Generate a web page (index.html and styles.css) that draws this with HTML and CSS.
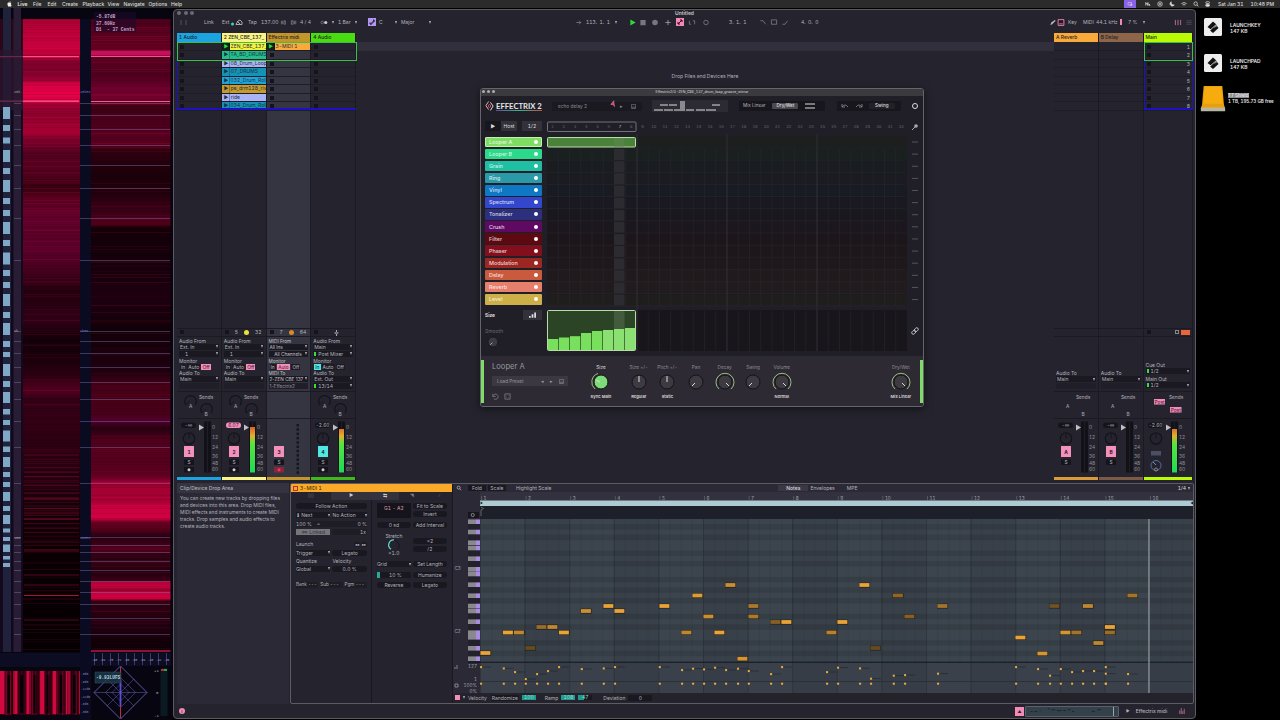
FILE: index.html
```html
<!DOCTYPE html>
<html lang="en">
<head>
<meta charset="UTF-8">
<meta name="viewport" content="width=device-width, initial-scale=1.0">
<title>Untitled</title>
<link rel="stylesheet" href="styles.css">
</head>
<body>

<header class="menubar">
    <svg class="apple" viewBox="0 0 10 12"><path d="M6.8 0C5.6.3 5 1.3 5 2.4 6.200 2.300 6.900 1.200 6.800 0ZM5 3.200C4 2.600 1 2.400.8 6.200c0 2.400 1.700 5.300 3 5.300.6 0 .8-.3 1.500-.3s.9.3 1.500.3c1.100 0 2-1.700 2.400-2.900C7.300 7.800 7.300 5 9 4.200 7.900 2.500 6.100 2.700 5 3.200Z"/></svg>
    <nav>
        <b>Live</b><span>File</span><span>Edit</span><span>Create</span><span>Playback</span><span>View</span><span>Navigate</span><span>Options</span><span>Help</span>
    </nav>
    <div class="status">
        <i class="share"><svg viewBox="0 0 12 8"><path d="M2 1h7v5H2zM7 4h3v3H7z"/></svg></i>
        <svg viewBox="0 0 8 8"><path d="M1 6V2l2 3 1-3v4l2-2v2h1"/></svg>
        <svg viewBox="0 0 8 8"><circle cx="4" cy="4" r="3"/><circle cx="4" cy="4" r="1"/></svg>
        <svg viewBox="0 0 8 8"><path class="solid" d="M3 1a3 3 0 1 0 4 4.200A3.200 3.200 0 0 1 3 1Z"/></svg>
        <svg viewBox="0 0 8 8"><path d="M.5 3.500q3.500-3 7 0M2 5q2-1.600 4 0M3.600 6.400h.8"/></svg>
        <svg viewBox="0 0 8 8"><circle cx="3.500" cy="3.500" r="2.300"/><path d="m5.200 5.200 2 2"/></svg>
        <svg viewBox="0 0 8 8"><rect x="1" y="1" width="5" height="2.300" rx="1"/><rect class="solid" x="1" y="4.500" width="5" height="2.500" rx="1"/></svg>
        <span>Sat Jan 31</span><span>10:48 PM</span>
    </div>
</header>

<main class="screen">
    <svg class="analyser" id="analyser" viewBox="0 8 173 712"></svg>

    <section class="live">
        <div class="titlebar"><div class="lights"><i></i><i></i><i></i></div>Untitled</div>

        <div class="transport">
            <div class="tl">
                <i class="ghost"></i><span>Link</span><span>Ext</span>
                <svg class="wide" viewBox="0 0 12 8"><circle cx="1.500" cy="6" r="1.500" fill="#3fd6c0"/><path d="M5 6.500h6V4L9 2 7 3zM6 3l3 3" stroke="#aaa" fill="none"/></svg>
                <span>Tap</span><span>137.00</span>
                <svg viewBox="0 0 6 8"><path d="M0 2v4M1.500 2v4M3 2v4h1.500V2z" class="dimline"/></svg>
                <svg viewBox="0 0 6 8"><path d="M0 2h2v4H0zM3.500 2v4M5 2v4" class="dimline"/></svg>
                <span>4 / 4</span>
                <svg viewBox="0 0 8 8"><circle cx="2" cy="4" r="1.500" class="dimline"/><circle cx="6" cy="4" r="1.800" fill="#ccc"/></svg>
                <em class="dd"></em><span>1 Bar</span><em class="dd"></em>
                <svg class="violet" viewBox="0 0 8 8"><path d="M2 6h2V4h2V2M2 4.500V6h1M5 2h1v1.500" fill="none" stroke="#222"/></svg>
                <span>C</span><em class="dd"></em><span>Major</span><em class="dd"></em>
            </div>
            <div class="tc">
                <svg viewBox="0 0 8 8"><path d="M1 4h5M4 2l2 2-2 2" class="dimline"/></svg>
                <span>113.&ensp;1.&ensp;1</span><em class="dd"></em>
                <svg viewBox="0 0 8 8"><path d="M1 .5 7 4 1 7.500z" fill="#2bdc3c"/></svg>
                <svg viewBox="0 0 8 8"><path d="M1 1h6v6H1z" fill="#777681"/></svg>
                <svg viewBox="0 0 8 8"><circle cx="4" cy="4" r="3.200" fill="#777681"/></svg>
                <svg viewBox="0 0 8 8"><path d="M4 1v6M1 4h6" stroke="#999" fill="none"/></svg>
                <svg class="pink" viewBox="0 0 8 8"><path d="m2 6 4-4M2 4v2h2M4 2h2v2" stroke="#402" fill="none"/></svg>
                <svg viewBox="0 0 8 8"><path d="M1 2v4h2M5 2h2v4" class="dimline"/></svg>
                <svg viewBox="0 0 8 8"><circle cx="4" cy="4" r="2.600" class="dimline"/></svg>
                <span>3.&ensp;1.&ensp;1</span>
                <svg viewBox="0 0 8 8"><path d="M1 2h3l3 4" class="dimline"/></svg>
                <svg viewBox="0 0 8 8"><path d="M1 1h6v5H1z" class="dimline"/></svg>
                <svg viewBox="0 0 8 8"><path d="M1 6h3l3-4" class="dimline"/></svg>
                <span>4.&ensp;0.&ensp;0</span>
            </div>
            <div class="tr">
                <svg viewBox="0 0 8 8"><path d="m1 7 1-3 4-3 1 1-4 4z" fill="#bbb"/></svg>
                <svg viewBox="0 0 8 8"><path d="M.7.7h6.600v6.600H.7z" fill="#241824" stroke="#f58cb8"/><path d="M2 5h4v1H2z" fill="#f58cb8"/></svg>
                <span>Key</span><span>MIDI</span><span>44.1 kHz</span><i class="bar"></i><span>7 %</span><em class="dd"></em>
                <svg viewBox="0 0 8 8"><path d="M1 1v6M4 1v6M7 1v6" stroke="#c87599" fill="none"/></svg>
                <svg viewBox="0 0 8 8"><path d="M1 2h6M1 4h6M1 6h6" stroke="#4a4954" fill="none"/></svg>
            </div>
        </div>

        <div class="session">
            <div class="tracks" id="tracks"></div>
            <div class="droparea">Drop Files and Devices Here</div>
            <div class="tracks" id="returns"></div>
        </div>

        <div class="detail">
            <aside class="help">
                <h2>Clip/Device Drop Area</h2>
                <p>You can create new tracks by dropping files<br>and devices into this area. Drop MIDI files,<br>MIDI effects and instruments to create MIDI<br>tracks. Drop samples and audio effects to<br>create audio tracks.</p>
            </aside>
            <div class="clipview">
                <div class="clippanel">
                    <div class="cliphead"><i></i>3-MIDI 1</div>
                    <div class="cliptabs"><i>▯▯</i><i class="on">▶</i><i class="on">⇆</i><i>◥</i><i>∕</i></div>
                    <div class="clipcols">
                        <div class="follow">
                            <div class="btn">Follow Action</div>
                            <div class="two act"><span class="sel">⬇ Next<em class="dd"></em></span><span class="sel">No Action<em class="dd"></em></span></div>
                            <div class="prob"><span>100 %</span><small>△</small><span>0 %</span></div>
                            <div class="two link"><span class="linked">⇔ Linked</span><span class="num">1x</span></div>
                            <div class="launch">Launch <span><b class="pill">◂◂</b> <b class="pill">▸▸</b></span></div>
                            <div class="two"><span class="sel">Trigger<em class="dd"></em></span><span class="btn">Legato</span></div>
                            <div class="two caps"><span>Quantize</span><span>Velocity</span></div>
                            <div class="two"><span class="sel">Global<em class="dd"></em></span><span class="btn">0.0 %</span></div>
                            <div class="three"><span>Bank ---</span><span>Sub ---</span><span>Pgm ---</span></div>
                        </div>
                        <div class="tools">
                            <div class="tcol">
                                <div class="range">G1 - A2</div>
                                <div class="btn sd">0 sd</div>
                                <div class="stretch">Stretch<svg viewBox="0 0 14 14"><path class="ktrack" d="M3 12A6 6 0 1 1 11 12"/><path d="M3.500 12A6 6 0 0 1 7 1" stroke="#5fd4cd" stroke-width="1.500" fill="none"/></svg>×1.0</div>
                                <div class="sel gridsel">Grid<em class="dd"></em></div>
                                <div class="btn amt">10 %</div>
                                <div class="btn">Reverse</div>
                            </div>
                            <div class="tcol right">
                                <div class="btn">Fit to Scale</div><div class="btn b2">Invert</div>
                                <div class="btn b3">Add Interval</div>
                                <div class="btn b4">×2</div><div class="btn b5">/2</div>
                                <div class="btn b6">Set Length</div><div class="btn b7">Humanize</div><div class="btn b8">Legato</div>
                            </div>
                        </div>
                    </div>
                </div>
                <div class="editor">
                    <div class="edhead">
                        <svg viewBox="0 0 8 8"><circle cx="3.500" cy="3.500" r="2"/><path d="m5 5 2 2"/></svg>
                        <span class="btn">Fold</span><span class="btn">Scale</span><i></i><span>Highlight Scale</span>
                        <div class="edtabs"><b>Notes</b><span>Envelopes</span><span>MPE</span></div>
                        <span class="quant">1/4<em class="dd"></em></span>
                    </div>
                    <svg id="roll" viewBox="453 492 740 201"></svg>
                    <div class="edfoot">
                        <i></i><em class="dd"></em><span>Velocity</span><span class="btn">Randomize</span><b>100</b><span class="rampt">Ramp</span><b>108</b><b class="part">47</b><span class="dev">Deviation</span><span class="zero">0</span>
                    </div>
                </div>
            </div>
        </div>

        <footer class="bottombar">
            <i class="info">i</i>
            <i class="warp">▲</i>
            <div class="mini"><svg viewBox="0 0 94 10"><path d="M4 5h2M8 5h3M14 4h1M23 2h2M27 3h4M33 4h5M40 4h3M45 3h3M50 5h2M72 5h3M78 3h4"/></svg></div>
            <em>▶</em><span>Effectrix midi</span>
            <svg class="bars" viewBox="0 0 8 8"><path d="M1 3v5M3 0v8M5 4v4M7 1v7"/></svg>
        </footer>

        <div class="plugin">
            <div class="ptitle"><div class="lights"><i></i><i></i><i></i></div>Effectrix2/3-ZEN_CBE_137_drum_loop_groove_mirror</div>
            <div class="phead">
                <svg class="logo" viewBox="0 0 10 12"><path d="M4 1 1 5.500 4 10" stroke="#f4b8c4"/><path d="M6 2 9 6 6 11" stroke="#eee"/><path d="m5 4 1.500 2L5 8 3.500 6z" stroke="#e34a61"/></svg>
                <strong>EFFECTRIX 2</strong>
                <div class="preset"><span>echo delay 2</span><em>▸</em><svg class="disk" viewBox="0 0 6 6"><path d="M.5.5h5v5h-5zM2 5.500V3.500h2v2"/></svg></div>
                <div class="scene"><svg viewBox="0 0 72 12"><path d="M0 10h9M10 10h9M20 10h10M32 10h8M42 10h9M52 10h10M6 5h8M15 5h8M58 5h8"/><path class="cur" d="M26 1h5v10h-5z"/></svg></div>
                <div class="mix"><span>Mix Linear</span><b>Dry/Wet</b><svg viewBox="0 0 10 6"><path d="M0 1h10M0 5h10"/></svg></div>
                <div class="undo"><svg viewBox="0 0 8 6"><path d="M1 1v3h3M1 4q3-4 6 0"/></svg><svg viewBox="0 0 8 6"><path d="M7 1v3H4M7 4Q4 0 1 4"/></svg><b>Swing</b></div>
                <svg class="gear" viewBox="0 0 8 8"><circle cx="4" cy="4" r="2.500"/></svg>
            </div>
            <div class="pbody">
                <div class="pleft">
                    <div class="host"><b>▶</b><span>Host</span><span class="rate">1/2</span></div>
                    <div id="effects"></div>
                    <div class="sizehead"><b>Size</b><i><svg viewBox="0 0 8 6"><path d="M0 4h2v2H0zM3 2h2v4H3zM6 0h2v6H6z"/></svg></i></div>
                    <div class="smooth">Smooth<svg class="knob" viewBox="0 0 20 20"><circle class="kface" cx="10" cy="10" r="7"/><path d="m9 11-3 3"/></svg></div>
                </div>
                <svg id="steps" viewBox="545 116 376 240"></svg>
            </div>
            <div class="pfoot">
                <div class="fxname"><h3>Looper A</h3><div class="load"><span>Load Preset</span><em>◂</em><em>▸</em><svg class="disk" viewBox="0 0 6 6"><path d="M.5.5h5v5h-5zM2 5.500V3.500h2v2"/></svg></div><div class="rst"><svg viewBox="0 0 8 8"><path d="M1 1v3h3M1 4a3 3 0 1 1 1 2.500"/></svg><svg viewBox="0 0 8 8"><path d="M1 1h6v6H1zM3 3h.5M5 5h.5M3 5h.5M5 3h.5"/></svg></div></div>
                <div class="knobs" id="knobs"></div>
            </div>
        </div>
        <svg class="cursor" viewBox="0 0 8 9"><path d="M5 0 6 8 4.300 5.500 1 5z"/></svg>
    </section>

    <aside class="desktop">
        <div class="file"><svg viewBox="0 0 18 18"><rect width="18" height="18" rx="1.500" fill="#eee"/><path d="M3.500 9 9 3.500 13 7 7.500 12zM6 12.500l7-4.500 1.500 2L9 15z" fill="#111"/><path d="m5 13 9-8" stroke="#eee" stroke-width=".8"/></svg><p>LAUNCHKEY<br>147 KB</p></div>
        <div class="file"><svg viewBox="0 0 18 18"><rect width="18" height="18" rx="1.500" fill="#eee"/><path d="M3.500 9 9 3.500 13 7 7.500 12zM6 12.500l7-4.500 1.500 2L9 15z" fill="#111"/><path d="m5 13 9-8" stroke="#eee" stroke-width=".8"/></svg><p>LAUNCHPAD<br>147 KB</p></div>
        <div class="file drive"><svg viewBox="0 0 30 30"><path d="m2 25 1.500-4h23L28 25v3H2z" fill="#b8b5a0"/><path d="M5 1h20l2 23H3z" fill="#e99f0b"/><path d="M6 2h18l1.500 18h-21z" fill="#f6ab0e"/></svg><p><mark>T7 Shield</mark><br>1 TB, 195.73 GB free</p></div>
    </aside>
</main>

<script src="script.js"></script>
</body>
</html>
```

FILE: styles.css
```css
* {
    box-sizing: border-box;
}
body {
    margin: 0;
    width: 1280px;
    height: 720px;
    overflow: hidden;
    background: #000;
    color: #b4b3ba;
    font-family: Inter, "Liberation Sans", sans-serif;
    font-size: 5px;
    font-variant-numeric: tabular-nums;
    line-height: 6px;
    white-space: nowrap;
}
i, em {
    font-style: normal;
}
svg {
    display: block;
    flex: none;
}
.menubar {
    display: flex;
    align-items: center;
    height: 8px;
    background: #2b2b2b;
    color: #ddd;
    padding: 0 6px 0 7px;
}
.menubar nav {
    display: grid;
    grid-template-columns: 15.5px 14.5px 14.5px 20.500px 25px 16px 25px 22.500px 12px;
    margin-left: 5.500px;
    font-weight: 500;
}
.apple {
    width: 5px;
    height: 6px;
    fill: #eee;
}
.status {
    display: flex;
    align-items: center;
    margin-left: auto;
    gap: 6px;
    font-weight: 500;
}
.status svg {
    width: 6px;
    height: 6px;
    fill: none;
    stroke: #ddd;
}
.status .solid {
    fill: #ddd;
}
.status .share {
    background: #8a62e8;
    width: 12px;
    height: 8px;
    margin-right: 3px;
    padding: 1px 3px;
}
.status span {
    margin-left: 1px;
}
.screen {
    display: flex;
    height: 712px;
}
.analyser {
    width: 173px;
    height: 712px;
}
.analyser text {
    font-family: "Liberation Mono", monospace;
}

/* Live window */
.live {
    position: relative;
    display: flex;
    flex-direction: column;
    width: 1023px;
    height: 710px;
    margin-top: 1px;
    background: #25242e;
    border: 1px solid #5b5a62;
    border-radius: 4px;
    overflow: hidden;
}
.live > div {
    flex: none;
}
.titlebar {
    height: 7px;
    text-align: center;
    color: #c8c8cc;
    font-weight: 600;
    line-height: 7px;
}
.lights {
    float: left;
    display: flex;
    gap: 2.500px;
    padding: 1px 0 0 3px;
    margin-right: -20px;
}
.lights i {
    width: 4px;
    height: 4px;
    border-radius: 50%;
    background: #6b6a72;
}
.dd {
    display: inline-block;
    justify-self: start;
    width: 0;
    border: 1.500px solid transparent;
    border-top: 3px solid #b4b3ba;
    border-bottom: 0;
}
.dimline {
    fill: none;
    stroke: #8b8a94;
    stroke-width: .8;
}
.transport {
    display: grid;
    grid-template-columns: 406px 472px 1fr;
    height: 16px;
    padding-top: 1px;
}
.transport > div {
    display: grid;
    align-items: center;
    height: 8px;
}
.transport svg {
    width: 8px;
    height: 7px;
}
.transport .wide {
    width: 12px;
    height: 8px;
}
.tl {
    grid-template-columns: 24px 18px 9px 17px 13px 19px 10px 10px 20px 12px 6px 17px 13px 11px 16px 6px 28px 8px;
    padding-left: 6px;
}
.ghost {
    width: 7px;
    height: 5px;
    border: 1px solid #3b3a45;
    border-width: 0 2px;
}
.transport .violet {
    height: 8px;
    background: #b396f3;
}
.tc {
    grid-template-columns: 11px 29px 14px 10px 12px 13px 12px 12px 14px 27px 30px 11px 11px 20px 30px;
    margin-left: -5px;
}
.transport .pink {
    height: 8px;
    background: #f08ab8;
}
.tr {
    grid-template-columns: 8px 11px 15px 13px 24px 8px 15px 31px 11px 8px;
    margin-left: -3px;
}
.bar {
    width: 1.500px;
    height: 6px;
    background: #f08ab8;
}

/* session */
.session {
    display: flex;
    height: 447px;
    padding: 0 2px 0 3px;
}
.tracks {
    display: flex;
    position: relative;
}
.droparea {
    flex: 1;
    text-align: center;
    padding-top: 40px;
    background: linear-gradient(#25242e 9px, #302f3b 9px, #302f3b 18px, #25242e 18px);
}
.track {
    display: flex;
    flex-direction: column;
    width: 44.750px;
    border-right: 1px solid #1b1a23;
}
.track.main {
    width: 49.500px;
}
.track.lit {
    background: #343540;
}
.track h4 {
    margin: 0 0 1px;
    height: 8.500px;
    padding-left: 2px;
    font-size: 4.900px;
    font-weight: 500;
    line-height: 9px;
    color: #222;
    overflow: hidden;
}
.slot {
    display: flex;
    height: 8.550px;
    border-bottom: 1px solid #1e1d27;
    padding: 1px 0 0 3px;
    line-height: 7px;
}
.slot i {
    width: 4px;
    height: 4px;
    margin-top: 1px;
    background: #15141c;
}
.slot.clip {
    padding: 0;
    color: #1d3040;
}
.slot.clip i {
    width: 8px;
    height: 7.500px;
    margin: 0;
    padding-left: 2px;
    background: none;
    border-right: 1px solid #0004;
    font-size: 5px;
}
.slot.playing i {
    background: #10211a;
    color: #2bdc3c;
}
.slot span {
    padding-left: 1px;
    overflow: hidden;
}
.main .slot {
    justify-content: space-between;
    padding-right: 2px;
}
.scenes {
    position: absolute;
    left: 0;
    right: 0;
    top: 9px;
    height: 68px;
    border: solid #1c12c4;
    border-width: 1px 1px 2px;
}
#tracks .scenes {
    border-right: 0;
}
#returns .scenes {
    left: 89.500px;
}
.scenes:before {
    content: "";
    display: block;
    height: 17px;
    margin: -1px -1px 0;
    border: 1px solid #3bc14a;
}
.space {
    flex: 1;
}
.stat {
    display: flex;
    align-items: center;
    height: 9.500px;
    padding: 0 4px 0 3px;
    border: solid #1b1a23;
    border-width: 1px 0;
    justify-content: space-between;
}
.stat i {
    width: 4px;
    height: 4px;
    background: #15141c;
}
.stat .dot {
    width: 5px;
    height: 5px;
    border-radius: 50%;
}
.stat .mic {
    width: 5px;
    height: 7px;
    margin-right: 12px;
    fill: none;
    stroke: #aaa;
}
.stat .stop {
    background: none;
    border: 1px solid #888;
    margin-left: 23px;
}
.stat .back {
    width: 9px;
    height: 5px;
    margin-right: -2px;
    background: #e8663a;
}
.io {
    display: flex;
    flex-direction: column;
    height: 55px;
    padding: .5px 2px 2px;
    border-bottom: 1px solid #1b1a23;
    font-size: 5px;
}
.lit .io {
    font-size: 4.700px;
    font-variant-numeric: normal;
    color: #c4c3ca;
}
.io.end {
    justify-content: flex-end;
}
.io label {
    height: 6px;
    line-height: 7px;
}
.sel {
    display: flex;
    justify-content: space-between;
    align-items: center;
    background: #1a1922;
}
.io .sel {
    height: 6px;
    margin-bottom: 1px;
    padding: 0 1px;
}
.io .sel.flat {
    height: 6px;
    margin-bottom: 0;
    background: #201f29;
    color: #99989f;
}
.io .sel u {
    width: 2px;
    height: 4px;
    background: #3ddc3a;
    margin-right: 2px;
}
.io .sel span {
    flex: 1;
}
.mon {
    display: flex;
    justify-content: space-between;
    height: 6px;
    padding: 0 8px 0 1px;
}
.mon span {
    background: #1c1b24;
    padding: 0 1px;
}
.mon .hot {
    background: #f590bd;
    color: #401428;
}
.mon .cyan {
    background: #4fe8e4;
    color: #123;
}
.sends {
    height: 27px;
    border-bottom: 1px solid #1b1a23;
}
.sends svg {
    width: 44px;
    height: 26px;
}
.sends text, .mixer text {
    fill: #b4b3ba;
    font-size: 4.800px;
}
.ring {
    fill: none;
    stroke: #14131a;
    stroke-width: 1.200;
}
.mixer {
    height: 57.500px;
}
.mixer svg {
    width: 44px;
    height: 57px;
}
.strip {
    height: 3.500px;
}

/* detail view */
.detail {
    display: flex;
    height: 221px;
    margin-top: 3px;
    padding: 0 1px 0 3px;
}
.help {
    width: 112px;
    background: #2a2935;
    line-height: 7.100px;
}
.help h2 {
    margin: 0;
    height: 10px;
    padding: 2px 3px;
    font-size: 5px;
    font-weight: 500;
    background: #34333f;
}
.help p {
    margin: 1.500px 3px;
    font-size: 4.850px;
}
.clipview {
    display: flex;
    width: 905px;
    margin-left: 1px;
    border: 1px solid #5d5c64;
    border-radius: 2px;
    overflow: hidden;
}
.clippanel {
    width: 162px;
    border-right: 1px solid #191820;
}
.cliphead {
    display: flex;
    align-items: center;
    gap: 2px;
    height: 8px;
    padding-left: 2px;
    background: #f9aa28;
    color: #33220a;
}
.cliphead i {
    width: 5px;
    height: 5px;
    border: 1px solid #c42b35;
}
.cliptabs {
    display: grid;
    grid-template-columns: 40px 41px 27px 27px 27px;
    height: 8px;
    line-height: 8px;
    text-align: center;
    font-size: 4.500px;
}
.cliptabs i {
    color: #777681;
}
.cliptabs .on {
    background: #33323d;
    color: #ccc;
}
.clipcols {
    display: flex;
    height: 203px;
}
.btn {
    display: block;
    height: 6px;
    border-radius: 3px;
    background: #191820;
    text-align: center;
}
.follow {
    width: 81px;
    padding: 3px 4px 0 5px;
    border-right: 1px solid #191820;
}
.two {
    display: grid;
    grid-template-columns: 1fr 1fr;
    gap: 2px;
    height: 6px;
}
.act {
    margin: 3px 0;
}
.prob {
    display: flex;
    justify-content: space-between;
    background: #1e1d26;
    height: 6px;
}
.prob small {
    margin-right: 32px;
    font-size: 3px;
}
.link {
    margin-top: 2px;
}
.linked {
    background: #76757c;
    color: #37363d;
    text-align: center;
}
.num {
    background: #1e1d26;
    text-align: right;
    padding-right: 1px;
}
.launch {
    display: flex;
    justify-content: space-between;
    height: 7px;
    margin: 6px 0 1.500px;
}
.pill {
    padding: 0 1px;
    border-radius: 3px;
    background: #191820;
    font-size: 4px;
}
.caps {
    margin: 2px 0;
}
.three {
    display: grid;
    grid-template-columns: repeat(3, 1fr);
    gap: 2px;
    margin-top: 10.500px;
    font-size: 4.600px;
}
.three span {
    background: #1e1d26;
}
.tools {
    display: flex;
    gap: 2px;
    padding: 3px 4px 0 5px;
}
.tcol {
    width: 34px;
}
.range {
    height: 15px;
    background: #15141c;
    color: #d59bae;
    text-align: center;
    padding-top: 2px;
}
.sd {
    margin-top: 4px;
}
.stretch {
    height: 24px;
    margin: 5px 0 4px;
    text-align: center;
}
.stretch svg {
    width: 12px;
    height: 12px;
    margin: 0 auto -1px;
}
.ktrack {
    fill: none;
    stroke: #15141c;
}
.gridsel {
    height: 6px;
    margin-top: 3px;
}
.amt {
    margin: 4.500px 0 4.500px;
    border-radius: 0;
    border-left: 3px solid #27a898;
}
.b2 {
    margin-top: 2px;
}
.b3 {
    margin-top: 5px;
}
.b4 {
    margin-top: 9.500px;
}
.b5 {
    margin-top: 2px;
}
.b6 {
    margin-top: 9.500px;
}
.b7, .b8 {
    margin-top: 4.500px;
}
.editor {
    width: 741px;
}
.edhead {
    display: flex;
    align-items: center;
    height: 8px;
    padding: 0 2px;
    gap: 2px;
    background: #2a2935;
}
.edhead > svg {
    width: 6px;
    height: 6px;
    margin: 0 4px 0 1px;
    fill: none;
    stroke: #bbb;
}
.edhead .btn {
    width: 18px;
    border-radius: 0;
}
.edhead > i {
    width: 6px;
}
.edtabs {
    display: flex;
    gap: 12px;
    margin-left: 225px;
}
.edtabs b {
    font-weight: 500;
    padding: 0 8px;
    margin-right: -8px;
    background: #393844;
    color: #ddd;
}
.edtabs span:nth-child(2) {
    margin-left: -2px;
}
.quant {
    display: flex;
    align-items: center;
    gap: 2px;
    margin-left: auto;
    margin-right: 1px;
    color: #ddd;
}
#roll {
    width: 740px;
    height: 201px;
}
#roll text {
    font-size: 4.600px;
    fill: #a5a4ac;
}
.edfoot {
    display: flex;
    align-items: center;
    height: 9px;
    padding-left: 2px;
    gap: 3px;
    background: #24232c;
}
.edfoot > i {
    width: 5px;
    height: 5px;
    background: #f58cb8;
}
.edfoot .btn {
    width: 28px;
    margin-left: 1px;
    border-radius: 0;
}
.edfoot b {
    width: 14px;
    height: 5px;
    line-height: 5px;
    background: #1f9b90;
    color: #9fd9d0;
    text-align: center;
    font-weight: 400;
}
.edfoot .part {
    background: linear-gradient(90deg, #1f9b90 6px, #191820 6px);
}
.rampt {
    margin-left: 6px;
}
.dev {
    margin-left: 8px;
}
.zero {
    width: 24px;
    background: #191820;
    text-align: center;
}
.bottombar {
    display: flex;
    flex: 1;
    align-items: center;
    padding-left: 5px;
    font-weight: 500;
}
.bottombar .info {
    width: 6px;
    height: 6px;
    border-radius: 50%;
    background: #f58cb8;
    color: #222;
    text-align: center;
}
.warp {
    width: 9px;
    height: 9px;
    margin-left: 830px;
    line-height: 9px;
    background: #f58cb8;
    color: #222;
    text-align: center;
    font-size: 4px;
}
.mini {
    width: 94px;
    height: 11px;
    margin-left: 1px;
    border: 1px solid #55616b;
    background: #34414a;
    border-radius: 1px;
}
.mini svg {
    height: 9px;
    border-right: 1px solid #99a3aa;
    width: 88px;
    stroke: #1a2228;
}
.bottombar em {
    margin: 0 6px 0 7px;
    font-size: 4px;
}
.bars {
    width: 8px;
    height: 6px;
    margin-left: 11px;
    stroke: #c87599;
}

/* plug-in window */
.plugin {
    position: absolute;
    left: 306px;
    top: 78px;
    width: 444px;
    height: 319px;
    background: #201f27;
    border: 1px solid #66656d;
    border-radius: 3px;
    overflow: hidden;
    box-shadow: 0 2px 8px #0008;
}
.ptitle {
    height: 7px;
    background: #3b3a3f;
    color: #ccc;
    text-align: center;
    font-size: 3.600px;
    font-weight: 500;
    line-height: 7px;
}
.ptitle .lights {
    gap: 2px;
    padding-left: 1px;
}
.ptitle .lights i {
    width: 3px;
    height: 3px;
    background: #aaa;
}
.phead {
    display: flex;
    align-items: center;
    height: 20px;
    padding-left: 4px;
}
.phead svg {
    fill: none;
    stroke: #ddd;
}
.logo {
    width: 9px;
    height: 12px;
}
.phead strong {
    width: 46px;
    margin-left: 2px;
    font-family: Lato, sans-serif;
    font-size: 7.700px;
    line-height: 8px;
    font-weight: 700;
    color: #e6e6e8;
    border-bottom: 1px solid #555;
    border-image: linear-gradient(90deg, #6a4a9a, #2fb58f, #d04a40) 1;
}
.preset {
    display: flex;
    width: 90px;
    height: 9px;
    margin-left: 10px;
    padding: 0 6px 0 6px;
    align-items: center;
    background: #1a1920;
    gap: 8px;
    color: #8a8990;
    font-size: 4.800px;
}
.preset span {
    flex: 1;
}
.disk {
    width: 5px;
    height: 5px;
    fill: none;
    stroke: #77767e;
}
.phead .disk {
    stroke: #66656d;
}
.scene {
    width: 76px;
    height: 12px;
    margin-left: 10px;
    background: #2c2b33;
    padding: 0 2px;
}
.scene svg {
    width: 72px;
    height: 12px;
}
.scene .cur {
    fill: #8a8990;
    stroke: none;
}
.mix {
    display: flex;
    align-items: center;
    width: 86px;
    height: 10px;
    margin-left: 11px;
    padding-left: 4px;
    background: #17161d;
    gap: 7px;
    font-size: 4.600px;
}
.phead b {
    padding: 0 4px;
    background: #4a4951;
    color: #ddd;
    border-radius: 1px;
    font-weight: 500;
}
.mix svg {
    width: 10px;
    height: 6px;
}
.undo {
    display: flex;
    align-items: center;
    height: 10px;
    width: 64px;
    margin-left: 12px;
    padding-left: 4px;
    gap: 6px;
    background: #17161d;
    font-size: 4.600px;
}
.undo svg {
    width: 8px;
    stroke: #77767e;
}
.phead .undo b {
    padding: 0 6px;
    background: #222129;
}
.gear {
    width: 8px;
    height: 8px;
    margin-left: 10px;
}
.pbody {
    display: flex;
    height: 240px;
}
.pleft {
    width: 64px;
    padding: 5px 3px 0 4px;
}
.host {
    display: flex;
    align-items: center;
    height: 10px;
    margin-bottom: 5.500px;
    color: #ddd;
}
.host > * {
    background: #33323b;
    height: 10px;
    line-height: 10px;
    text-align: center;
    width: 16px;
}
.host b {
    background: #18171e;
}
.host .rate {
    width: 20px;
    margin-left: 5px;
}
.fx {
    display: flex;
    align-items: center;
    height: 10.600px;
    margin-bottom: 1.520px;
    padding: 0 4px;
    border-radius: 1px;
    color: #fffc;
    font-size: 5.400px;
    font-weight: 500;
}
.fx i {
    width: 4px;
    height: 4px;
    margin-left: auto;
    border-radius: 50%;
    background: #fff;
}
.fx:first-child {
    border: 1px solid #c4efae;
    padding: 0 3px;
}
.sizehead {
    display: flex;
    justify-content: space-between;
    align-items: center;
    margin-top: 5px;
    color: #ddd;
    font-size: 4.800px;
}
.sizehead i {
    width: 19px;
    height: 10px;
    padding: 2px 6px;
    background: #33323b;
}
.sizehead svg {
    width: 7px;
    height: 6px;
    fill: #ddd;
}
.smooth {
    margin-top: 8px;
    color: #6a6971;
}
.knob {
    width: 14px;
    height: 14px;
    overflow: visible;
}
.smooth .knob {
    margin: 1px 0 0 1px;
}
.knob path {
    fill: none;
    stroke: #ddd;
}
.kface {
    fill: #3d3a42;
    stroke: #131218;
}
#steps {
    width: 376px;
    height: 240px;
}
#steps text {
    font-size: 4px;
    fill: #66656d;
    text-anchor: middle;
}
.pfoot {
    display: flex;
    height: 51px;
    background: #2d2a33;
    border: solid #80dc68;
    border-width: 0 3px;
    border-image: linear-gradient(transparent 5px, #80dc68 5px, #80dc68 46px, transparent 46px) 1;
}
.fxname {
    width: 97px;
    padding: 7px 0 0 8px;
    color: #99989f;
}
.fxname h3 {
    margin: 0 0 5px;
    font-size: 7.600px;
    font-weight: 400;
    line-height: 8px;
}
.load {
    display: flex;
    align-items: center;
    gap: 6px;
    width: 76px;
    height: 10px;
    padding: 0 4px 0 5px;
    background: #3b3841;
}
.load span {
    flex: 1;
    font-size: 4.700px;
}
.rst {
    display: flex;
    gap: 5px;
    padding-top: 7px;
}
.rst svg {
    width: 7px;
    height: 7px;
    fill: none;
    stroke: #77767e;
}
.knobs {
    display: flex;
    margin-left: -3.500px;
    padding-top: 7.500px;
    color: #8e8d95;
    font-size: 4.700px;
}
.kn {
    width: 28.600px;
    text-align: center;
}
.kn svg {
    width: 20px;
    height: 20px;
    margin: 2px auto 2.500px;
}
.kn b {
    display: block;
    color: #ddd;
    font-size: 4.100px;
    font-weight: 600;
}
.kn:nth-child(1) {
    width: 47px;
    color: #ddd;
}
.kn:last-child {
    margin-left: 90.500px;
}
.cursor {
    position: absolute;
    left: 436px;
    top: 90px;
    width: 6px;
    height: 8px;
    fill: #e83a70;
    stroke: #f6b0c0;
    stroke-width: .5;
}

/* desktop icons */
.desktop {
    padding: 10px 0 0 8px;
    color: #e6e6e6;
    font-size: 4.900px;
    font-weight: 600;
}
.file {
    display: flex;
    height: 35.500px;
    gap: 8px;
}
.file svg {
    width: 18px;
    height: 18px;
}
.file p {
    margin: 4px 0 0;
}
.drive {
    margin: -6px 0 0 -7px;
    padding: 2px 0 0 2px;
    gap: 1px;
}
.drive svg {
    width: 28px;
    height: 28px;
}
.drive p {
    margin-top: 8px;
    font-size: 4.500px;
}
.drive mark {
    background: #8a8a8f;
    color: #e6e6e6;
}
```

FILE: script.js
```javascript
// seeded so that the spectrum looks the same on each load
var seed = 7;
function rnd() {
    seed = (seed * 16807) % 2147483647;
    return seed / 2147483647;
}
function rect(x, y, w, h, fill, extra) {
    return '<rect x="' + x + '" y="' + y + '" width="' + w + '" height="' + h + '" fill="' + fill + '" ' + (extra || '') + '/>';
}
function line(x1, y1, x2, y2, color, extra) {
    return '<path d="M' + x1 + ' ' + y1 + 'L' + x2 + ' ' + y2 + '" stroke="' + color + '" fill="none" ' + (extra || '') + '/>';
}
function text(x, y, str, extra) {
    return '<text x="' + x + '" y="' + y + '" ' + (extra || '') + '>' + str + '</text>';
}
function gradient(id, stops) {
    return '<linearGradient id="' + id + '" x1="0" y1="19" x2="0" y2="652" gradientUnits="userSpaceOnUse">' +
        stops.map(function(s) {
            return '<stop offset="' + (s[0] - 19) / 633 + '" stop-color="#' + s[1] + '"/>';
        }).join('') + '</linearGradient>';
}

// ---- spectrum analyser ----
function drawAnalyser() {
    var left = [[19, '9a002e'], [25, 'b80038'], [50, 'c8003e'], [58, 'b00036'], [62, '7c002a'], [78, '8a0030'], [84, 'cc0040'], [92, 'e60048'], [100, 'd80044'], [105, '980030'], [112, '8a002c'], [132, 'a80032'], [140, '7c002c'], [155, '54001e'], [175, '54001e'], [188, '34000f'], [198, '5b0020'], [215, '60002a'], [250, '5c002a'], [270, '48001e'], [290, '24000f'], [320, '300016'], [340, '120008'], [365, '20000d'], [376, '2e0012'], [390, '50001e'], [400, '340016'], [430, '300012'], [470, '240010'], [520, '120008'], [550, '0a0004'], [652, '050003']];
    var right = [[19, '48001a'], [35, '5c0020'], [50, '66001f'], [51, 'c4105c'], [55, 'c4105c'], [56, '5c0222'], [75, '4c001c'], [88, '70002e'], [100, '70002c'], [104, '680020'], [106, '3a0012'], [120, '48001a'], [134, '580020'], [146, '56001c'], [150, '300010'], [175, '1c000a'], [192, '22000c'], [220, '48001a'], [224, '540018'], [228, '150008'], [260, '14000a'], [300, '1e0010'], [330, '120008'], [372, '200010'], [385, '480018'], [413, '480018'], [421, '540030'], [428, '260010'], [440, '50001c'], [475, '5c0020'], [483, 'a00032'], [500, 'a80034'], [510, 'd00042'], [519, 'cc0040'], [522, '6a0022'], [531, '500019'], [536, '24000f'], [550, '55001c'], [555, '280010'], [575, '280010'], [581, '400018'], [582, 'b8003a'], [587, 'b8003a'], [590, '88002c'], [593, 'c8003e'], [599, 'cc003e'], [601, '300010'], [625, '220010'], [650, '0c0005'], [652, '050003']];
    var s = '<defs>' + gradient('specA', left) + gradient('specB', right) + '</defs>';
    s += rect(0, 8, 173, 712, '#070510');
    s += rect(0, 19, 23, 85, '#2a0618') + rect(0, 104, 23, 548, '#120a1c');
    s += rect(3, 8, 8, 644, '#20213a') + rect(13.5, 8, 7.5, 644, '#291d35');
    s += rect(23, 19, 57, 633, 'url(#specA)') + rect(91, 19, 79.5, 633, 'url(#specB)');

    for (var y = 20; y < 650; y += 1 + Math.floor(rnd() * 3)) {
        s += rect(23, y, 57, 1, rnd() > .5 ? '#000' : '#ff1850', 'opacity="' + (rnd() * .12).toFixed(2) + '"');
        s += rect(91, y, 79.5, 1, rnd() > .4 ? '#000' : '#ff1850', 'opacity="' + (rnd() * .12).toFixed(2) + '"');
    }
    // partials in the low end of the left channel
    for (y = 455; y < 550; y += 4.3) {
        s += line(24, y, 79, y, '#90102e', 'stroke-width=".8" opacity="' + (.2 + rnd() * .4).toFixed(2) + '"');
    }
    [499, 508.5, 513, 519, 551, 575, 585, 595.5, 620].forEach(function(y) {
        s += line(24, y, 79, y, '#a8133c', y == 595.5 ? 'stroke-width="1.2"' : 'stroke-width=".7" opacity=".7"');
    });
    s += rect(0, 56, 79, 1.2, '#ff4f8a') + rect(0, 100.5, 79, 1.3, '#ff5f93') + rect(91, 101, 79, 1, '#ea6284') + rect(91, 56, 79, 1, '#ff4f8a');
    s += rect(0, 50, 23, 60, '#2a1830', 'opacity=".7"');
    s += rect(80, 19, 11, 640, '#0a0a20') + rect(0, 653, 91, 14, '#0c0c22');

    [103, 115, 129, 145, 165, 188, 218, 260, 331, 341, 353, 367, 382, 399, 421, 447, 483, 537, 545, 552, 561, 570, 581, 592, 604, 618, 634].forEach(function(y) {
        s += line(80, y + .5, 170, y + .5, '#8480b8', 'opacity=".5" stroke-width=".8"') + line(14, y + .5, 21, y + .5, '#8480b8', 'opacity=".5" stroke-width=".8"');
    });
    [[107, 12], [125, 6], [137.5, 6], [150, 12], [168, 6], [180, 12], [198, 6], [210, 6], [222, 12], [240, 6], [252.5, 12], [270, 6], [282, 6], [294, 12], [312, 6], [323, 12], [341, 6], [352, 5], [364, 12], [381, 6], [392, 11], [409, 5.5], [420, 5], [430.5, 11], [446.5, 5.5], [457, 10], [472, 5], [482, 5], [492, 9], [506, 5], [515, 9], [528.5, 4], [537, 4], [544.5, 7.5], [556, 3.5], [563, 4]].forEach(function(k) {
        s += rect(3, k[0], 7, k[1], '#7fa7c6');
    });
    s += rect(94, 12, 42, 20, '#1d0a2a', 'opacity=".6"');
    ['-5.87dB', '37.60Hz', 'D1  - 37 Cents'].forEach(function(t, i) {
        s += text(96, 18 + i * 6.7, t, 'font-size="4.600" font-weight="700" fill="#c9a3c6" xml:space="preserve"');
    });
    s += text(14, 93, '10k', 'font-size="3.5" fill="#aaa"') + text(80, 93, '10kHz', 'font-size="3.5" fill="#7d78c8"');
    s += text(14, 332, '1k', 'font-size="3.5" fill="#aaa"') + text(80, 332, '1kHz', 'font-size="3.5" fill="#7d78c8"');
    s += text(14, 539, '100', 'font-size="3.5" fill="#aaa"') + text(80, 539, '100Hz', 'font-size="3.5" fill="#7d78c8"');

    // level axis
    s += rect(91, 650, 79.5, 2, '#90103a') + rect(91, 653, 80, 13, '#0c0c22');
    for (var i = 0; i < 10; i++) {
        s += line(94.5 + i * 8, 653, 94.5 + i * 8, 665, '#5f5a98', 'stroke-width=".6"');
        s += text(92 + i * 8, 661, '-' + (90 - i * 6), 'font-size="3" fill="#a8a3d8"');
    }

    // scope
    s += rect(0, 671, 80, 44, '#3c0014');
    for (i = 0; i < 7; i++) {
        s += rect(i * 13.2, 671, 4.5, 43, '#d00a40') + rect(i * 13.2 + 7, 675, 3, 38, '#050006');
    }
    for (i = 0; i < 40; i++) {
        s += rect((rnd() * 79).toFixed(1), 671, 1, 44, rnd() > .5 ? '#000' : '#e01048', 'opacity=".35"');
    }
    s += rect(80, 653, 11, 67, '#0a0a20');
    for (i = 0; i < 6; i++) {
        s += text(81, 675 + i * 7.5, '-' + [3, 6, 12, 12, 6, 3][i] + 'dB', 'font-size="3" fill="#8f8ac8"');
    }
    // goniometer
    s += '<g fill="none" stroke="#6660b8" stroke-width=".9"><path d="M120.500 666 147 692.500 120.500 719 94 692.500Z"/><path stroke-width=".5" d="M120.500 677.500 135.500 692.500 120.500 707.500 105.500 692.500ZM120.500 684 129 692.500 120.500 701 112 692.500ZM94 692.500H147M107 679 134 706M134 679 107 706"/></g>';
    s += line(120.5, 667, 120.5, 718, '#c8283a') + line(120.5, 680, 120.5, 706, '#4858ff', 'stroke-width="2" opacity=".7"');
    s += rect(95, 672, 26, 11, '#1d3a4c', 'stroke="#3d6374" stroke-width=".5" opacity=".8"') + text(96, 679, '-9.93LUFS', 'font-size="4.5" font-weight="700" fill="#b7d6dc"');
    s += text(154, 672, '+1', 'font-size="4" fill="#bbb"') + text(156, 694, '0', 'font-size="4" fill="#bbb"') + text(154, 717, '-1', 'font-size="4" fill="#bbb"');
    s += rect(160.5, 668, 7, 48, '#0b1a20') + rect(161, 669, 3, 2, '#b03030') + rect(164, 669, 3, 2, '#30a050');
    document.getElementById('analyser').innerHTML = s;
}

// ---- session tracks ----
var clips = [
    ['ZEN_CBE_137_', '#f6f23a', 1], ['TA_BD_DRUMS', '#21c08a'], ['08_Drum_Loop', '#a9b4f8'], ['07_DRUMS', '#1692b4'],
    ['032_Drum_Roll', '#1ca4dc'], ['pe_drm128_riv', '#c79a2c'], ['ride', '#a9b4f8'], ['034_Drum_Roll', '#1692b4']
];
var tracks = [
    { name: '1 Audio', color: '#1ba4e0', num: '1', vol: '-∞', from: ['Audio From', 'Ext. In', '1'], mon: 2, to: ['Audio To', 'Main', ''], stat: '' },
    { name: '2 ZEN_CBE_137_', color: '#f8f485', num: '2', vol: '6.07', level: 427, from: ['Audio From', 'Ext. In', '1'], mon: 2, to: ['Audio To', 'Main', ''], stat: '<span>5</span><i class="dot" style="background:#e8e23a"></i><span>32</span>' },
    { name: 'Effectrix midi', color: '#c3962c', num: '3', midi: 1, from: ['MIDI From', 'All Ins', 'All Channels'], mon: 1, to: ['MIDI To', '2-ZEN CBE 137', '1-Effectrix2'], stat: '<span>7</span><i class="dot" style="background:#d98a2c"></i><span>64</span>' },
    { name: '4 Audio', color: '#49dc10', strip: '#40b81c', num: '4', vol: '-2.60', level: 429, from: ['Audio From', 'Main', 'Post Mixer'], mon: 0, to: ['Audio To', 'Ext. Out', '13/14'], led: 1, stat: '<svg class="mic" viewBox="0 0 5 7"><path d="M2.500 1v2.500M1 3q0 2 1.500 2T4 3M2.500 5v2"/></svg>' }
];
var returns = [
    { name: 'A Reverb', color: '#f9aa3a', strip: '#d99a3a', num: 'A', vol: '-∞', ret: 1, stat: '' },
    { name: 'B Delay', color: '#8d6548', strip: '#7a5b46', num: 'B', vol: '-∞', ret: 1, stat: '' },
    { name: 'Main', color: '#b8fb05', num: '', vol: '-2.60', level: 429, main: 1, stat: '<i class="stop"></i><i class="back"></i>' }
];

function select(label, led, arrow) {
    return '<div class="sel' + (arrow ? '' : ' flat') + '">' + (led ? '<u></u>' : '') + '<span>' + label + '</span>' + (arrow ? '<em class="dd"></em>' : '') + '</div>';
}
function ioSection(t) {
    if (t.main) {
        return '<div class="io end"><label>Cue Out</label>' + select('1/2', 1, 1) + '<label style="margin-top:1px">Main Out</label>' + select('1/2', 1, 1) + '</div>';
    }
    if (t.ret) {
        return '<div class="io end"><label>Audio To</label>' + select('Main', 0, 1) + select('', 0, 0) + '</div>';
    }
    var mon = ['In', 'Auto', 'Off'].map(function(m, i) {
        return '<span class="' + (i == t.mon ? (i == 0 ? 'cyan' : 'hot') : '') + '">' + m + '</span>';
    }).join('');
    return '<div class="io"><label>' + t.from[0] + '</label>' + select(t.from[1], 0, 1) +
        select((t.led ? '' : '&ensp;&ensp;') + t.from[2], t.led, 1) +
        '<label>Monitor</label><div class="mon">' + mon + '</div><label>' + t.to[0] + '</label>' +
        select(t.to[1], 0, 1) + select(t.to[2], t.led, t.led) + '</div>';
}
function sendsSection(t) {
    var s = '<div class="sends"><svg viewBox="0 0 44 26">';
    if (t.main) {
        s += text(25, 6.500, 'Sends') + rect(10, 7, 11, 5.5, '#f58cb8') + text(10.5, 11.5, 'Post', 'style="fill:#401428"') + rect(26, 15, 11.5, 5.5, '#f58cb8') + text(26.7, 19.5, 'Post', 'style="fill:#401428"');
    } else if (!t.midi) {
        s += text(22, 7, 'Sends') + text(12, 16, 'A') + text(27.5, 24, 'B');
        if (!t.ret) {
            s += '<path class="ring" d="M9 13A5.800 5.800 0 1 1 18 13M25 21A5.800 5.800 0 1 1 34 21"/>' + line(9, 12.5, 12.5, 9, '#15141c') + line(25, 20.5, 28.5, 17, '#15141c');
        }
    }
    return s + '</svg></div>';
}
function mixerSection(t) {
    var s = '<div class="mixer"><svg viewBox="0 419 44 57">';
    if (!t.midi) {
        s += rect(4, 422.5, 15, 5.5, t.vol == '6.07' ? '#f590bd' : '#15141c', 'rx="2.500"') + text(11.5, 427, t.vol, 'text-anchor="middle"' + (t.vol == '6.07' ? ' style="fill:#401428"' : ''));
        s += '<circle class="ring" cx="12" cy="438.500" r="5.700"/>' + line(12, 433.5, 12, 438.5, '#15141c');
        s += rect(27, 421.5, 7, 51, '#121118') + line(30.5, 422, 30.5, 472, '#25242e', 'stroke-width=".7"');
        if (t.level) {
            s += '<defs><linearGradient id="lv" x1="0" y1="427" x2="0" y2="472" gradientUnits="userSpaceOnUse"><stop offset="0" stop-color="#d8642a"/><stop offset=".2" stop-color="#e3b02b"/><stop offset=".36" stop-color="#5be33c"/><stop offset="1" stop-color="#1edb57"/></linearGradient></defs>';
            s += rect(28, t.level, 5, 472.5 - t.level, 'url(#lv)');
        }
        s += '<path d="M22 424.500v6l5-3z" fill="#c0bfc6"/>';
        [[0, 429], [12, 439], [24, 448.5], [36, 458], [48, 465], [60, 471]].forEach(function(n) {
            s += text(35, n[1], n[0], 'opacity=".75"');
        });
    } else {
        for (var y = 424; y < 474; y += 4.3) {
            s += rect(29.5, y, 2.5, 2.5, '#17161e');
        }
    }
    if (t.main) {
        s += rect(7, 451, 10, 4.5, '#4c4f62') + '<circle cx="12" cy="465.500" r="5" fill="none" stroke="#526da0"/>' + line(12, 465, 9, 462, '#7d8cae') + '<circle cx="12" cy="469.500" r="1.500" fill="none" stroke="#888"/>';
    } else {
        s += rect(7, 446, 10, 11, t.num == '4' ? '#4fe8e4' : '#f590bd') + text(12, 453.5, t.num, 'text-anchor="middle" font-weight="700" style="fill:#2a1420"');
        s += rect(7, 459.5, 10, 5.5, '#15141c') + text(12, 464, 'S', 'text-anchor="middle"');
        if (!t.ret) {
            s += rect(7, 467, 10, 5.5, t.midi ? '#8e2340' : '#15141c') + '<circle cx="12" cy="469.700" r="1.500" fill="' + (t.midi ? '#d44' : '#ccc') + '"/>';
        }
    }
    return s + '</svg></div>';
}
function trackHtml(t) {
    var s = '<div class="track' + (t.midi ? ' lit' : '') + (t.main ? ' main' : '') + '"><h4 style="background:' + t.color + '">' + t.name + '</h4>';
    for (var i = 0; i < 8; i++) {
        var c = t.num == '2' ? clips[i] : (t.midi && i == 0 ? ['3-MIDI 1', '#f9aa3a', 1] : null);
        if (c) {
            s += '<div class="slot clip' + (c[2] ? ' playing' : '') + '" style="background:' + c[1] + '"><i>▶</i><span>' + c[0] + '</span></div>';
        } else {
            s += '<div class="slot">' + (t.ret ? '' : '<i></i>') + (t.main ? '<span>' + (i + 1) + '</span>' : '') + '</div>';
        }
    }
    return s + '<div class="space"></div><div class="stat">' + (t.ret ? '' : '<i></i>') + t.stat + '</div>' +
        ioSection(t) + sendsSection(t) + mixerSection(t) +
        '<div class="strip" style="background:' + (t.strip || t.color) + '"></div></div>';
}

// ---- plug-in ----
var effects = [
    ['Looper A', '#7fdc62'], ['Looper B', '#2bd98a'], ['Grain', '#1fbfa4'], ['Ring', '#2a9aa8'], ['Vinyl', '#0f78c4'],
    ['Spectrum', '#3347cc'], ['Tonalizer', '#2c2f7c'], ['Crush', '#5f0a62'], ['Filter', '#5c0a12'], ['Phaser', '#840f1c'],
    ['Modulation', '#9c2622'], ['Delay', '#c95a3e'], ['Reverb', '#e67f6c'], ['Level', '#cdb048']
];
function drawSteps() {
    var s = '', col = 11.25, x, i;
    s += rect(547.5, 122, 88.5, 9.5, 'none', 'stroke="#88878f" stroke-width=".8" rx="1"');
    for (i = 0; i < 32; i++) {
        s += text(552.5 + i * col, 128, i + 1, i == 6 ? 'style="fill:#ddd"' : '');
    }
    effects.forEach(function(e, r) {
        var y = 136.5 + r * 12.12;
        s += rect(547, y, 360, 11.5, '#19171c') + rect(547, y, 360, 11.5, e[1], 'opacity=".04"');
        s += line(547, y + 11.8, 905, y + 11.8, '#2b2930', 'stroke-width=".6"');
        s += line(912, y + 5.5, 918, y + 5.5, '#55545c');
    });
    for (i = 1; i < 32; i++) {
        x = 547 + i * col;
        s += line(x, 149, x, 306, '#302e36', 'stroke-width=".5" opacity=".7"');
    }
    s += rect(547, 310, 360, 41, '#19161b');
    for (i = 8; i < 32; i++) {
        s += line(547 + i * col, 311, 547 + i * col, 351, '#27242a', 'stroke-width=".7"');
    }
    [8, 16, 24].forEach(function(n) {
        s += line(547 + n * col, 134, 547 + n * col, 351, '#37353d', 'stroke-width=".7"');
    });
    // play position
    for (i = 1; i < 14; i++) {
        s += rect(614, 137 + i * 12.12, 10.5, 11, '#2c2b30', 'rx="1"');
    }
    s += rect(547.5, 137.5, 88, 9.5, '#4a823c', 'stroke="#b7dca6" rx="1"') + rect(614, 138, 10, 8.5, '#548546');
    s += rect(547.5, 310.5, 88, 40, '#2b4425', 'stroke="#b7dca6" rx="1"') + rect(614, 311, 10.5, 19, '#435a3d');
    [339, 337.5, 336.2, 333, 331, 330, 329, 328].forEach(function(top, n) {
        s += rect(548 + n * 11, top, 10.3, 350 - top, n > 4 ? '#8ae070' : '#78e05c');
    });
    s += line(912, 130, 917, 125, '#aaa') + '<circle cx="916" cy="126" r="1.800" fill="#aaa"/>';
    s += '<g fill="none" stroke="#ddd" stroke-width=".8" transform="rotate(-45 915 331)"><rect x="911" y="329.500" width="4.500" height="3" rx="1.500"/><rect x="914.500" y="329.500" width="4.500" height="3" rx="1.500"/></g>';
    document.getElementById('steps').innerHTML = s;
}
function drawKnobs() {
    var list = [['Size', 'Sync Main', 'g'], ['Size +/-', 'Regular', 'u'], ['Pitch +/-', 'Static', 'u'], ['Pan', '', 'l'], ['Decay', '', 'r'], ['Swing', '', 'l'], ['Volume', 'Normal', 'r'], ['Dry/Wet', 'Mix Linear', 'r']];
    var hand = { g: 'm9 10-4-2', u: 'M10 10V4', l: 'm9 11-3 3', r: 'm11 11 3 3' };
    document.getElementById('knobs').innerHTML = list.map(function(k) {
        var arc = k[2] == 'r' ? 'M4 17A9 9 0 1 1 16 17' : (k[2] == 'g' ? 'M4 17A9 9 0 0 1 7 1.500' : '');
        return '<div class="kn">' + k[0] + '<svg class="knob" viewBox="0 0 20 20"><circle class="kface" cx="10" cy="10" r="7"' + (k[2] == 'g' ? ' style="fill:#7edc78"' : '') + '/><path style="stroke:#99bd83" d="' + arc + '"/><path d="' + hand[k[2]] + '"/></svg><b>' + k[1] + '</b></div>';
    }).join('');
}

// ---- piano roll ----
var notes = [
    [480, 653, 1], [502.5, 632.5, 1], [513.5, 632.5, .8], [525, 648, .35], [536, 627, .6], [547, 627, .8], [558.5, 632.5, 1],
    [580.5, 611, .85], [603, 606, 1], [614, 611, 1], [659, 606, 1], [681, 632.5, .8], [692, 595.5, .95], [703, 616.5, .85],
    [714, 632.5, 1], [725, 585, .85], [737, 658.7, .9], [748, 606, .7], [748, 616.5, .7], [770, 622, .5], [781, 622, 1],
    [826, 632.5, .75], [837, 622, 1], [859, 585, 1], [870, 648, .35], [892.5, 595.5, .55], [904, 616.5, .5], [937, 606, .65],
    [1015, 637.5, 1], [1037, 653.5, .9], [1049, 606, .4], [1060, 632.5, .9], [1071, 632.5, .65], [1082.5, 606, .8],
    [1093, 643, .8], [1104.5, 627, 1], [1104.5, 632.5, .6], [1127, 595.5, .65]
];
var velocities = [
    [481, 667], [503.7, 668.3], [515, 672], [525.7, 679], [537, 674], [548, 671], [559, 667], [581.7, 669], [603.7, 668.3],
    [615, 667], [659.7, 667], [682, 670], [693, 668.6], [704, 669.3], [715, 667.6], [726, 670], [738, 668.6], [748.7, 671],
    [771, 674], [782, 667], [827, 672], [838, 667.6], [860, 668.3], [871, 678.6], [893.7, 675.6], [905, 675], [938, 673.6],
    [1016, 667], [1038, 669], [1050, 675.6], [1060.7, 669], [1072, 672], [1083, 671], [1094, 671], [1105.7, 667], [1105.7, 673.6], [1128, 674]
];
function drawRoll() {
    var s = rect(453, 492, 740, 201, '#2a2935'), i, y;
    s += rect(480, 492, 713, 8.5, '#32313d') + rect(480, 500.5, 713, 5.5, '#aecbd3') + rect(480, 506, 713, 13, '#1d1f29');
    for (i = 0; i < 16; i++) {
        s += text(483.5 + i * 44.6, 499.5, i + 1) + line(481.5 + i * 44.6, 496, 481.5 + i * 44.6, 500, '#66656d', 'stroke-width=".7"');
    }
    s += rect(480, 519, 713, 143, '#3c444e');
    var white = [521.7, 532, 542.7, 548, 558.7, 569.3, 574, 584.7, 595.7, 606, 611, 621.7, 632.7, 637.3, 648.3, 658.7];
    s += rect(468, 519, 12, 143, '#23222c');
    for (y = 519; y < 662; y += 5.27) {
        var isWhite = white.some(function(w) { return Math.abs(w - y - 2.6) < 1.8; });
        if (!isWhite) {
            s += rect(480, y, 713, 5.3, '#353d45');
        }
    }
    white.forEach(function(w) {
        s += rect(468, w - 2.3, 8, 4.6, '#89888f') + rect(476, w - 2.3, 4, 4.6, '#a98de4');
    });
    s += rect(480, 662, 713, 31, '#3a414b');
    for (i = 0; i < 16; i++) {
        if (i % 2) {
            s += rect(480 + i * 44.6, 519, 44.6, 174, '#000', 'opacity=".05"');
        }
        s += line(480.5 + i * 44.6, 519, 480.5 + i * 44.6, 693, '#242a31', 'stroke-width=".5"');
    }
    for (i = 0; i < 64; i++) {
        s += line(480.5 + i * 11.15, 519, 480.5 + i * 11.15, 662, '#2c333b', 'stroke-width=".4" opacity=".4"');
    }
    s += line(468, 662.3, 1193, 662.3, '#171a22') + line(480, 681.5, 1193, 681.5, '#252b32', 'stroke-width=".7"');
    notes.forEach(function(n) {
        s += rect(n[0], n[1] - 2.3, 11, 4.8, '#1a1409', 'opacity=".8"') + rect(n[0] + .4, n[1] - 1.9, 10, 3.8, '#e9a338', 'opacity="' + n[2] + '"');
    });
    velocities.forEach(function(v) {
        s += line(v[0], v[1], v[0] + 10, v[1], '#20252b', 'stroke-width=".6"') + rect(v[0] - .9, v[1] - .9, 2, 2, '#f0ad3c') + rect(v[0] - .9, 682.7, 2, 2, '#f0ad3c');
    });
    s += line(1149, 519, 1149, 693, '#9ba0a6', 'stroke-width="1.2"');
    s += text(454.5, 569.5, 'C3') + text(454.5, 633, 'C2');
    s += '<g text-anchor="end">' + text(477, 667.5, '127') + text(477, 681, '1') + text(477, 687, '100%') + text(477, 692.5, '0%') + '</g>';
    s += rect(468, 512, 11, 6, '#17161e') + '<circle cx="472.700" cy="515" r="1.600" fill="none" stroke="#aaa" stroke-width=".7"/>';
    s += '<path d="M455 669v-2M457 669v-4M455 684h3v3h-3z" stroke="#aaa" stroke-width=".7" fill="none"/>';
    s += '<path d="M480.500 501.500 483 503l-2.500 1.500zM1193 501.500 1190.500 503l2.500 1.500z" fill="#222"/><path d="M481 507l2.500 1.500L481 510v6" fill="none" stroke="#999" stroke-width=".6"/>';
    document.getElementById('roll').innerHTML = s;
}

drawAnalyser();
document.getElementById('tracks').innerHTML = tracks.map(trackHtml).join('') + '<div class="scenes"></div>';
document.getElementById('returns').innerHTML = returns.map(trackHtml).join('') + '<div class="scenes"></div>';
document.getElementById('effects').innerHTML = effects.map(function(e) {
    return '<div class="fx" style="background:' + e[1] + '">' + e[0] + '<i></i></div>';
}).join('');
drawSteps();
drawKnobs();
drawRoll();
```
